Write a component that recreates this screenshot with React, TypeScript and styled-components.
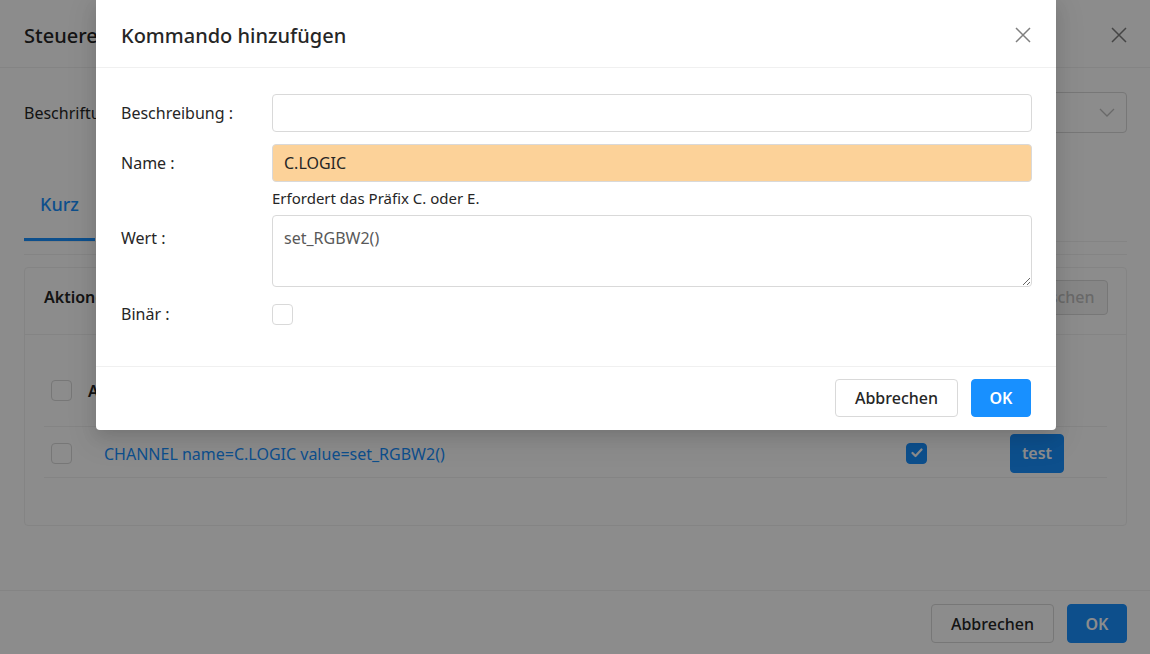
import React from 'react';
import styled, {createGlobalStyle} from 'styled-components';

const GlobalStyle = createGlobalStyle`
  html, body {
    margin: 0;
    padding: 0;
  }
  body {
    font-family: "Noto Sans", "Open Sans", sans-serif;
    color: #262626;
  }
  * { box-sizing: border-box; }
`;

const Screen = styled.div`
  position: relative;
  width: 1150px;
  height: 654px;
  overflow: hidden;
  background: #fff;
`;

const Page = styled.div`
  display: flex;
  flex-direction: column;
  height: 100%;
`;

const Header = styled.div`
  height: 68px;
  flex-shrink: 0;
  display: flex;
  align-items: center;
  justify-content: space-between;
  padding: 3px 23px 0 24px;
  border-bottom: 1px solid #f0f0f0;
`;

const Title = styled.div<{size: number; weight: number}>`
  font-size: ${p => p.size}px;
  font-weight: ${p => p.weight};
  color: #262626;
  white-space: nowrap;
`;

const CloseBtn = styled.span`
  display: flex;
  width: 16px;
  height: 16px;
`;

const Body = styled.div`
  flex: 1;
  padding: 24px 23px 0 24px;
`;

const FieldRow = styled.div`
  display: grid;
  grid-template-columns: 250px 1fr;
  align-items: center;
`;

const FieldLabel = styled.label`
  font-size: 16px;
  color: #262626;
`;

const Select = styled.div`
  height: 41px;
  border: 1px solid #d9d9d9;
  border-radius: 4px;
  display: flex;
  align-items: center;
  justify-content: flex-end;
  padding-right: 11px;
`;

const TabNav = styled.div`
  margin-top: 34px;
  display: flex;
  border-bottom: 1px solid #f0f0f0;
`;

const Tab = styled.div<{active?: boolean}>`
  padding: 25px 16px 22px;
  line-height: 24px;
  font-size: 18px;
  font-weight: 500;
  color: ${p => (p.active ? '#1890ff' : '#262626')};
  border-bottom: 3px solid ${p => (p.active ? '#1890ff' : 'transparent')};
`;

const PanelLine = styled.div`
  margin-top: 12px;
  border-top: 1px solid #f0f0f0;
`;

const Card = styled.div`
  margin-top: 12px;
  height: 259px;
  border: 1px solid #f0f0f0;
  border-radius: 4px;
`;

const CardHead = styled.div`
  height: 67px;
  display: flex;
  align-items: center;
  justify-content: space-between;
  padding: 0 18px 8px 19px;
  border-bottom: 1px solid #f0f0f0;
`;

const CardTitle = styled.div`
  font-size: 16px;
  font-weight: 600;
`;

const CardBody = styled.div`
  padding: 20px 19px;
`;

const TableRow = styled.div<{head?: boolean}>`
  display: grid;
  grid-template-columns: 60px 1fr 104px 97px;
  align-items: center;
  height: ${p => (p.head ? 72 : 51)}px;
  padding-top: ${p => (p.head ? 0 : 2)}px;
  border-bottom: 1px solid #f0f0f0;
  font-size: 16px;
`;

const Cell = styled.div<{pad?: number}>`
  padding-left: ${p => p.pad ?? 0}px;
  display: flex;
  align-items: center;
`;

const HeadText = styled.span`
  font-weight: 600;
  margin-left: -16px;
`;

const LinkText = styled.span`
  color: #1890ff;
  font-size: 16px;
  padding-top: 2px;
`;

const Check = styled.span<{checked?: boolean}>`
  display: inline-flex;
  align-items: center;
  justify-content: center;
  width: 21px;
  height: 21px;
  border-radius: 4px;
  border: 1px solid ${p => (p.checked ? '#1890ff' : '#d9d9d9')};
  background: ${p => (p.checked ? '#1890ff' : '#fff')};
`;

const Button = styled.button<{primary?: boolean; w?: number; h?: number; disabled?: boolean}>`
  width: ${p => p.w ?? 123}px;
  height: ${p => p.h ?? 39}px;
  padding: 0;
  border-radius: 4px;
  font-family: inherit;
  font-size: 16px;
  font-weight: ${p => (p.primary ? 600 : 500)};
  border: 1px solid ${p => (p.primary ? '#1890ff' : '#d9d9d9')};
  background: ${p => (p.primary ? '#1890ff' : p.disabled ? '#f5f5f5' : '#fff')};
  color: ${p => (p.primary ? '#fff' : p.disabled ? '#bfbfbf' : '#262626')};
`;

const Footer = styled.div`
  height: 64px;
  flex-shrink: 0;
  display: flex;
  justify-content: flex-end;
  align-items: flex-start;
  gap: 13px;
  padding: 13px 23px 0 0;
  border-top: 1px solid #f0f0f0;
`;

const Mask = styled.div`
  position: absolute;
  inset: 0;
  background: rgba(0, 0, 0, 0.45);
`;

const Dialog = styled.div`
  position: absolute;
  top: 0;
  left: 96px;
  width: 960px;
  background: #fff;
  border-radius: 0 0 4px 4px;
  box-shadow: 0 6px 16px rgba(0, 0, 0, 0.12), 0 9px 28px 8px rgba(0, 0, 0, 0.05);
`;

const DialogHeader = styled(Header)`
  padding: 3px 25px 0 25px;
`;

const DialogBody = styled.div`
  padding: 26px 24px 33px 25px;
`;

const FormRow = styled.div<{gap?: number}>`
  display: grid;
  grid-template-columns: 151px 1fr;
  align-items: start;
  margin-top: ${p => p.gap ?? 0}px;
`;

const FormLabel = styled.label<{offset?: number}>`
  line-height: 38px;
  padding-top: ${p => p.offset ?? 0}px;
  font-size: 16px;
  color: #262626;
`;

const Input = styled.input<{warn?: boolean}>`
  width: 100%;
  height: 38px;
  padding: 0 11px;
  font-family: inherit;
  font-size: 16px;
  color: #262626;
  border: 1px solid #d9d9d9;
  border-radius: 4px;
  background: ${p => (p.warn ? '#fcd299' : '#fff')};
  outline: none;
`;

const Help = styled.div`
  margin: 4px 0 5px;
  line-height: 24px;
  font-size: 15px;
  color: #262626;
`;

const TextArea = styled.textarea`
  display: block;
  width: 100%;
  height: 72px;
  padding: 10px 11px 4px;
  font-family: inherit;
  font-size: 16px;
  line-height: 24px;
  color: #595959;
  border: 1px solid #d9d9d9;
  border-radius: 4px;
  resize: vertical;
  outline: none;
`;

const CheckWrap = styled.div`
  height: 38px;
  display: flex;
  align-items: center;
`;

const DialogFooter = styled.div`
  display: flex;
  justify-content: flex-end;
  gap: 13px;
  padding: 12px 25px 13px 0;
  border-top: 1px solid #f0f0f0;
`;

const CloseIcon = () => (
  <CloseBtn>
    <svg width="16" height="16" viewBox="0 0 16 16">
      <path d="M1 1 L15 15 M15 1 L1 15" stroke="#7f7f7f" strokeWidth="1.5" fill="none" />
    </svg>
  </CloseBtn>
);

const Chevron = () => (
  <svg width="16" height="10" viewBox="0 0 16 10">
    <path d="M1 1 L8 8 L15 1" stroke="#bfbfbf" strokeWidth="1.3" fill="none" />
  </svg>
);

const Tick = () => (
  <svg width="12" height="10" viewBox="0 0 12 10">
    <path d="M1.5 5 L4.5 8 L10.5 1.5" stroke="#fff" strokeWidth="2.2" fill="none" strokeLinecap="round" strokeLinejoin="round" />
  </svg>
);

const App: React.FunctionComponent = () => {
  return (
    <Screen>
      <GlobalStyle />
      <Page>
        <Header>
          <Title size={20} weight={500}>Steuerelement</Title>
          <CloseIcon />
        </Header>
        <Body>
          <FieldRow>
            <FieldLabel>Beschriftung:</FieldLabel>
            <Select>
              <Chevron />
            </Select>
          </FieldRow>
          <TabNav>
            <Tab active>Kurz</Tab>
            <Tab>Lang</Tab>
          </TabNav>
          <PanelLine />
          <Card>
            <CardHead>
              <CardTitle>Aktionen</CardTitle>
              <Button disabled w={90} h={35}>Löschen</Button>
            </CardHead>
            <CardBody>
              <TableRow head>
                <Cell pad={7}><Check /></Cell>
                <Cell><HeadText>Aktion</HeadText></Cell>
                <Cell />
                <Cell />
              </TableRow>
              <TableRow>
                <Cell pad={7}><Check /></Cell>
                <Cell><LinkText>CHANNEL name=C.LOGIC value=set_RGBW2()</LinkText></Cell>
                <Cell><Check checked><Tick /></Check></Cell>
                <Cell><Button primary w={54} h={39}>test</Button></Cell>
              </TableRow>
            </CardBody>
          </Card>
        </Body>
        <Footer>
          <Button>Abbrechen</Button>
          <Button primary w={60}>OK</Button>
        </Footer>
      </Page>
      <Mask />
      <Dialog>
        <DialogHeader>
          <Title size={20} weight={500}>Kommando hinzufügen</Title>
          <CloseIcon />
        </DialogHeader>
        <DialogBody>
          <FormRow>
            <FormLabel>Beschreibung :</FormLabel>
            <Input defaultValue="" />
          </FormRow>
          <FormRow gap={12}>
            <FormLabel>Name :</FormLabel>
            <div>
              <Input warn defaultValue="C.LOGIC" />
              <Help>Erfordert das Präfix C. oder E.</Help>
            </div>
          </FormRow>
          <FormRow>
            <FormLabel offset={4}>Wert :</FormLabel>
            <TextArea defaultValue="set_RGBW2()" />
          </FormRow>
          <FormRow gap={8}>
            <FormLabel>Binär :</FormLabel>
            <CheckWrap><Check /></CheckWrap>
          </FormRow>
        </DialogBody>
        <DialogFooter>
          <Button h={38}>Abbrechen</Button>
          <Button primary w={60} h={38}>OK</Button>
        </DialogFooter>
      </Dialog>
    </Screen>
  );
};

export default App;
